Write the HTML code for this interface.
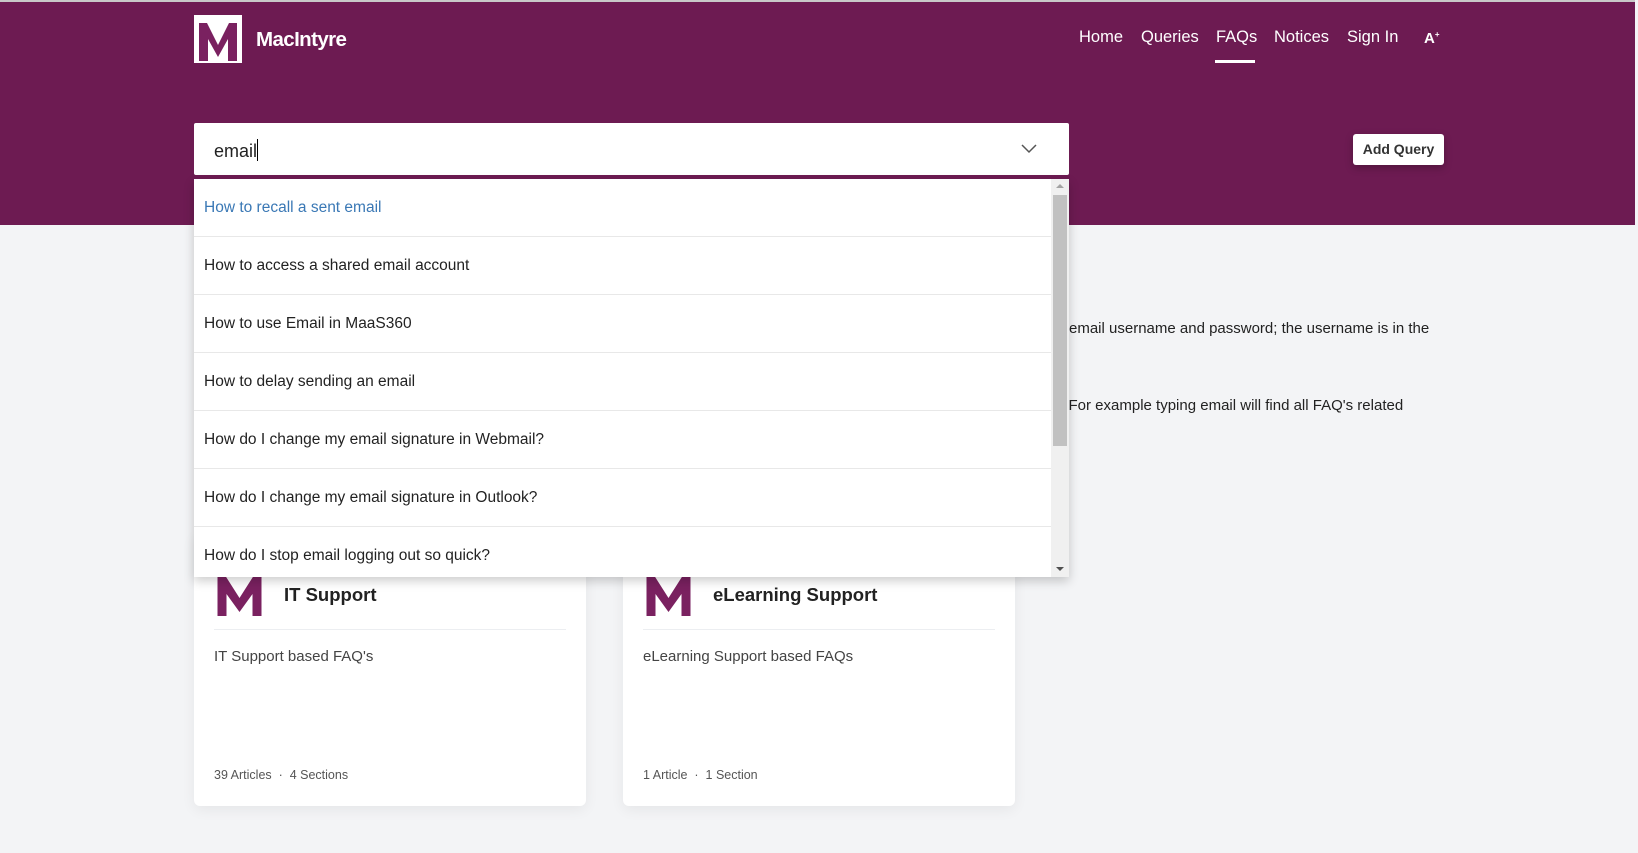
<!DOCTYPE html>
<html><head><style>
*{margin:0;padding:0;box-sizing:border-box}
body{width:1638px;height:853px;overflow:hidden;background:#f3f4f6;font-family:"Liberation Sans",sans-serif;position:relative;color:#222}
.hdr{position:absolute;left:0;top:0;width:1635px;height:225px;background:#6d1b52;border-top:2px solid #c8c8c8}
.abs{position:absolute}
.nav{position:absolute;top:28px;color:#fff;font-size:16.5px}
.card{position:absolute;top:533px;width:392px;height:273px;background:#fff;border-radius:6px;box-shadow:0 4px 14px rgba(0,0,0,.06)}
.card h3{position:absolute;left:90px;top:51px;font-size:18.5px;font-weight:bold;color:#222}
.card .dv{position:absolute;left:20px;right:20px;top:96px;border-top:1px solid #eceef1}
.card .ds{position:absolute;left:20px;top:115px;font-size:15px;color:#444}
.card .ft{position:absolute;left:20px;top:235px;font-size:12.5px;color:#555}
.dd{position:absolute;left:194px;top:179px;width:875px;height:398px;background:#fff;box-shadow:0 4px 10px rgba(0,0,0,.2);overflow:hidden}
.it{height:58px;border-bottom:1px solid #e8e8e8;padding:20px 0 0 10px;font-size:15.5px;color:#222;width:857px}
</style></head><body>
<div class="hdr"></div>
<svg class="abs" style="left:194px;top:15px" width="48" height="48" viewBox="0 0 48 48"><rect width="48" height="48" fill="#fff"/><path d="M5 46V8h8l11 22 11-22h8v38h-9V24l-10 18L14 24v22z" fill="#7a2160"/></svg>
<div class="abs" style="left:256px;top:28px;color:#fff;font-size:20.5px;font-weight:bold;letter-spacing:-.6px">MacIntyre</div>
<div class="nav" style="left:1079px">Home</div>
<div class="nav" style="left:1141px">Queries</div>
<div class="nav" style="left:1216px">FAQs</div>
<div class="abs" style="left:1215px;top:60px;width:40px;height:3px;background:#fff"></div>
<div class="nav" style="left:1274px">Notices</div>
<div class="nav" style="left:1347px">Sign In</div>
<div class="nav" style="left:1424px;font-weight:bold;font-size:15px;top:30px">A<sup style="font-size:8px">+</sup></div>
<div class="abs" style="left:194px;top:123px;width:875px;height:52px;background:#fff;border-radius:2px"></div>
<div class="abs" style="left:214px;top:139px;font-size:18px;color:#222">email<span style="display:inline-block;width:1px;height:22px;background:#000;vertical-align:-4px"></span></div>
<svg class="abs" style="left:1021px;top:144px" width="16" height="10"><path d="M1 1l7 7 7-7" stroke="#555" stroke-width="1.5" fill="none"/></svg>
<div class="abs" style="left:1353px;top:134px;width:91px;height:31px;background:#fff;border-radius:3px;box-shadow:0 3px 8px rgba(0,0,0,.25);font-size:14px;font-weight:bold;color:#333;text-align:center;line-height:31px">Add Query</div>
<div class="abs" style="left:1069px;top:320px;font-size:15px;color:#222">email username and password; the username is in the</div>
<div class="abs" style="left:1056px;top:397px;font-size:15px;color:#222">t. For example typing email will find all FAQ's related</div>
<div class="card" style="left:194px"><svg class="abs" style="left:21px;top:39px" width="49" height="44" viewBox="0 0 48 44"><path d="M2 44V4h8l14 22L38 4h8v40h-9V22l-13 18L11 22v22z" fill="#7a2160"/></svg><h3>IT Support</h3><div class="dv"></div><div class="ds">IT Support based FAQ's</div><div class="ft">39 Articles &nbsp;·&nbsp; 4 Sections</div></div>
<div class="card" style="left:623px"><svg class="abs" style="left:21px;top:39px" width="49" height="44" viewBox="0 0 48 44"><path d="M2 44V4h8l14 22L38 4h8v40h-9V22l-13 18L11 22v22z" fill="#7a2160"/></svg><h3>eLearning Support</h3><div class="dv"></div><div class="ds">eLearning Support based FAQs</div><div class="ft">1 Article &nbsp;·&nbsp; 1 Section</div></div>
<div class="dd">
<div class="it" style="color:#3a78b5">How to recall a sent email</div>
<div class="it">How to access a shared email account</div>
<div class="it">How to use Email in MaaS360</div>
<div class="it">How to delay sending an email</div>
<div class="it">How do I change my email signature in Webmail?</div>
<div class="it">How do I change my email signature in Outlook?</div>
<div class="it">How do I stop email logging out so quick?</div>
<div class="abs" style="left:857px;top:0;width:18px;height:398px;background:#f0f0f0"></div>
<div class="abs" style="left:859px;top:16px;width:14px;height:251px;background:#c1c1c1"></div>
<div class="abs" style="left:862px;top:5px;width:0;height:0;border:4px solid transparent;border-bottom-color:#a3a3a3;border-top:none"></div>
<div class="abs" style="left:862px;top:388px;width:0;height:0;border:4px solid transparent;border-top-color:#505050;border-bottom:none"></div>
</div>
</body></html>
